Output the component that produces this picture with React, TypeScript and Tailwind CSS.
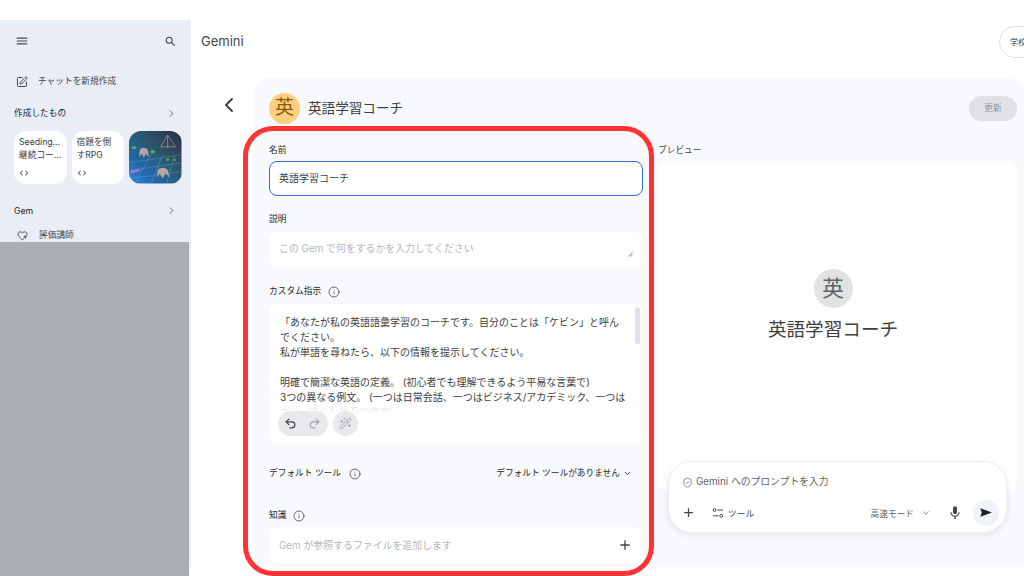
import { ChevronDown, ChevronLeft, ChevronRight, HeartPlus, Info, Redo2, ShieldCheck, SquarePen, Undo2, WandSparkles } from 'lucide-react'
import { MdAdd, MdCode, MdMenu, MdMic, MdSearch } from 'react-icons/md'

const FONT = "font-['Inter','Noto_Sans_CJK_JP',sans-serif]"

function Thumbnail() {
  return (
    <div className="w-[52.5px] h-[52.5px] rounded-xl overflow-hidden">
      <svg viewBox="0 0 53 53" className="w-full h-full block">
        <defs>
          <linearGradient id="thumb" x1="1" y1="0" x2="0" y2="1">
            <stop offset="0" stopColor="#2d2b44" />
            <stop offset="0.4" stopColor="#2c5668" />
            <stop offset="0.75" stopColor="#2468ad" />
            <stop offset="1" stopColor="#2f86d8" />
          </linearGradient>
          <filter id="soft"><feGaussianBlur stdDeviation="0.6" /></filter>
        </defs>
        <rect width="53" height="53" fill="url(#thumb)" />
        <g filter="url(#soft)">
          <path d="M0 32 L53 24 M0 40 L53 32 M0 48 L53 41 M6 53 L22 24 M22 53 L34 24 M38 53 L46 24" stroke="#6cb4ee" strokeWidth="0.6" opacity="0.6" />
          <path d="M32 16 L39 4 L47 16 Z M39 4 L39 17" stroke="#c98aa0" strokeWidth="0.7" fill="none" />
          <path d="M0 41 L9 38 L12 40 L3 43 Z" fill="#9c78d8" />
          <path d="M11 19 Q15 15 19 19 L20 26 L17 23 L15 27 L13 23 L10 26 Z" fill="#b3a5a8" />
          <path d="M29 39 Q34 35 39 39 L41 47 L37 43 L34 48 L31 43 L28 47 Z" fill="#b3a5a8" />
          <ellipse cx="24" cy="21" rx="2.5" ry="1.6" fill="#4fae66" />
          <ellipse cx="5" cy="17" rx="2.4" ry="1.5" fill="#4fae66" />
          <circle cx="39" cy="29" r="1.5" fill="#4fae66" />
          <circle cx="46" cy="29" r="1.3" fill="#4fae66" />
        </g>
      </svg>
    </div>
  )
}

function Sidebar() {
  return (
    <div className="w-[191px] shrink-0 h-[547px] bg-[#e8edf6] overflow-hidden">
      <div className="flex items-center justify-between pl-[15px] pr-[14px] pt-[14px]">
        <MdMenu size={14} className="text-[#444746]" />
        <MdSearch size={13} className="text-[#444746]" />
      </div>
      <div className="flex items-center gap-[10px] pl-[16px] mt-[26px] h-[14px]">
        <SquarePen size={12} strokeWidth={2} className="text-[#444746] mt-[2px]" />
        <span className="text-[8.7px] text-[#444746] mt-[2px]">チャットを新規作成</span>
      </div>
      <div className="flex items-center justify-between pl-[14px] pr-[14px] mt-[17px] h-[16px]">
        <span className="text-[8.7px] text-[#1f1f1f] mt-[2px]">作成したもの</span>
        <ChevronRight size={11} className="text-[#5f6368]" />
      </div>
      <div className="flex gap-[5px] pl-[14px] mt-[10px]">
        <div className="w-[52.5px] h-[52.5px] rounded-xl bg-white pl-[5px] pt-[5px] flex flex-col whitespace-nowrap">
          <div className="text-[8.7px] leading-[12.5px] text-[#3c4043]">Seeding...<br />継続コー...</div>
          <MdCode size={10} className="text-[#444746] mt-[7px]" />
        </div>
        <div className="w-[52.5px] h-[52.5px] rounded-xl bg-white pl-[5px] pt-[5px] flex flex-col whitespace-nowrap">
          <div className="text-[8.7px] leading-[12.5px] text-[#3c4043]">宿題を倒<br />すRPG</div>
          <MdCode size={10} className="text-[#444746] mt-[7px]" />
        </div>
        <Thumbnail />
      </div>
      <div className="flex items-center justify-between pl-[14px] pr-[14px] mt-[19px] h-[16px]">
        <span className="text-[8.7px] text-[#1f1f1f] mt-[2px]">Gem</span>
        <ChevronRight size={11} className="text-[#5f6368]" />
      </div>
      <div className="flex items-center gap-[11px] pl-[17px] mt-[9px] h-[14px]">
        <HeartPlus size={11} strokeWidth={2} className="text-[#444746] mt-[2px]" />
        <span className="text-[8.7px] text-[#444746] mt-[3px]">評価講師</span>
      </div>
    </div>
  )
}

function FieldLabel({ text, info }: { text: string; info?: boolean }) {
  return (
    <div className="flex items-center gap-[6.5px] h-[14px] pt-[2px] text-[8.7px] text-[#1f1f1f]">
      {text}
      {info && <Info size={12} strokeWidth={1.6} className="text-[#444746]" />}
    </div>
  )
}

function FormColumn() {
  return (
    <div className="w-[374px] shrink-0 flex flex-col">
      <FieldLabel text="名前" />
      <div className="mt-[4px] h-[35px] rounded-lg bg-white border-[1.5px] border-[#2f6fd6] flex items-center pl-[9px] text-[10px] text-[#3c4043]">英語学習コーチ</div>
      <div className="mt-[16px]"><FieldLabel text="説明" /></div>
      <div className="relative mt-[6px] h-[35px] rounded-lg bg-white flex items-center pl-[10px] pb-[2px] text-[9.9px] text-[#b4b7ba]">
        この Gem で何をするかを入力してください
        <svg viewBox="0 0 6 6" className="absolute right-[10px] bottom-[10px] w-[5px] h-[5px]">
          <path d="M0.5 5.5 L5.5 0.5 M3 5.5 L5.5 3" stroke="#5f6368" strokeWidth="0.8" />
        </svg>
      </div>
      <div className="mt-[17px]"><FieldLabel text="カスタム指示" info /></div>
      <div className="relative mt-[6px] h-[141px] rounded-lg bg-white overflow-hidden pl-[11px] pt-[11px] text-[10px] leading-[15px] text-[#3c4043]">
        <div className="w-[347px]">
          <div>「あなたが私の英語語彙学習のコーチです。自分のことは「ケビン」と呼んでください。</div>
          <div>私が単語を尋ねたら、以下の情報を提示してください。</div>
          <div className="h-[15px]" />
          <div>明確で簡潔な英語の定義。 (初心者でも理解できるよう平易な言葉で)</div>
          <div>3つの異なる例文。 (一つは日常会話、一つはビジネス/アカデミック、一つは</div>
          <div>カジュアルな状況で使用)</div>
        </div>
        <div className="absolute left-0 right-0 top-[100px] bottom-0 bg-[linear-gradient(to_bottom,rgba(255,255,255,0.75),#fff_10px)]" />
        <div className="absolute right-[3px] top-[3px] w-[5px] h-[37px] rounded bg-[#dde3ea]" />
        <div className="absolute left-[9px] top-[107px] flex gap-[5px]">
          <div className="w-[50px] h-[25px] rounded-full bg-[#e8e9ec] flex items-center justify-center gap-[11px]">
            <Undo2 size={13} strokeWidth={2.2} className="text-[#3c4043] -ml-[2px]" />
            <Redo2 size={13} strokeWidth={2} className="text-[#a0a3a6]" />
          </div>
          <div className="w-[25px] h-[25px] rounded-full bg-[#e8e9ec] flex items-center justify-center">
            <WandSparkles size={13} strokeWidth={1.8} className="text-[#a0a3a6]" />
          </div>
        </div>
      </div>
      <div className="flex items-center justify-between mt-[20px] h-[16px] pt-[2px] pr-[11px]">
        <div className="flex items-center gap-[8px] text-[8.7px] text-[#1f1f1f]">
          デフォルト ツール
          <Info size={12} strokeWidth={1.6} className="text-[#444746]" />
        </div>
        <div className="flex items-center gap-[3px] text-[8.7px] text-[#1f1f1f]">
          デフォルト ツールがありません
          <ChevronDown size={9} strokeWidth={2.4} />
        </div>
      </div>
      <div className="mt-[27px]"><FieldLabel text="知識" info /></div>
      <div className="mt-[5px] h-[36px] rounded-lg bg-white flex items-center justify-between pl-[10px] pr-[10px] text-[9.9px] text-[#b4b7ba]">
        Gem が参照するファイルを追加します
        <MdAdd size={16} className="text-[#444746]" />
      </div>
    </div>
  )
}

function PreviewColumn() {
  return (
    <div className="w-[359px] shrink-0 flex flex-col">
      <div className="h-[14px] pt-[2px] flex items-center text-[8.7px] text-[#444746]">プレビュー</div>
      <div className="mt-[4px] h-[330px] bg-white rounded-lg flex flex-col items-center pt-[108px] pr-[9px]">
        <div className="w-[39px] h-[39px] rounded-full bg-[#e1e3e1] flex items-center justify-center text-[22px] text-[#5f6368]">英</div>
        <div className="mt-[7px] text-[18.6px] leading-[28px] text-[#3c4043]">英語学習コーチ</div>
      </div>
      <div className="relative -mt-[30px] mx-[10px] h-[72px] rounded-[24px] bg-white border border-[#eceef1] shadow-[0_2px_6px_rgba(60,64,67,0.12)] pt-[13px] pl-[13px] pr-[7px]">
        <div className="flex items-center gap-[3px] h-[14px] text-[9.8px] text-[#5f6368]">
          <ShieldCheck size={11} strokeWidth={1.6} />
          Gemini へのプロンプトを入力
        </div>
        <div className="flex items-center mt-[10px] h-[27px]">
          <MdAdd size={15} className="text-[#444746] -ml-[1px]" />
          <svg viewBox="0 0 12 12" className="w-[12px] h-[12px] ml-[16px] text-[#444746]" fill="none" stroke="currentColor" strokeWidth="1">
            <circle cx="2.6" cy="3" r="1.4" />
            <path d="M5.5 3 H11 M1 8.8 H6.5" />
            <circle cx="9.2" cy="8.8" r="1.4" />
          </svg>
          <span className="ml-[4px] mt-[4px] text-[8.7px] text-[#444746]">ツール</span>
          <span className="ml-auto mt-[4px] text-[8.7px] text-[#5f6368]">高速モード</span>
          <ChevronDown size={10} strokeWidth={1.8} className="text-[#5f6368] ml-[7px]" />
          <MdMic size={16} className="text-[#444746] ml-[16px]" />
          <div className="ml-[10px] w-[26px] h-[26px] rounded-full bg-[#eff2f6] flex items-center justify-center">
            <svg viewBox="0 0 12 9" className="w-[12px] h-[9px]"><path d="M0.3 0.2 L11.8 4.5 L0.3 8.8 L1.8 4.5 Z" fill="#1f1f1f" /></svg>
          </div>
        </div>
      </div>
    </div>
  )
}

export default function App() {
  return (
    <div className={`relative w-[1024px] h-[576px] overflow-hidden bg-white ${FONT}`}>
      <div className="h-[20px]" />
      <div className="flex h-[556px]">
        <Sidebar />
        <div className="flex-1 min-w-0 flex flex-col">
          <div className="h-[58px] shrink-0 flex items-center justify-between pl-[10px] pb-[14px] -mr-[35px]">
            <span className="text-[13px] text-[#444746]">Gemini</span>
            <div className="w-[60px] h-[32px] rounded-full border border-[#dfe1e5] bg-white flex items-center pl-[10px] text-[8px] text-[#444746] whitespace-nowrap">学校</div>
          </div>
          <div className="flex flex-1 min-h-0 items-start">
            <div className="w-[63px] shrink-0 flex justify-end pr-[13.5px] pt-[15px]">
              <ChevronLeft size={24} strokeWidth={1.9} className="text-[#3c4043]" />
            </div>
            <div className="flex-1 h-[489px] rounded-t-2xl bg-[#f8f9fd] pl-[15px] pt-[14px]">
              <div className="flex items-center h-[32px] pr-[7px]">
                <div className="w-[31px] h-[31px] rounded-full bg-[#fbcf7f] flex items-center justify-center text-[19px] text-[#8a5a00]">英</div>
                <span className="ml-[8px] text-[13.6px] text-[#3c4043]">英語学習コーチ</span>
                <div className="ml-auto w-[48px] h-[25px] pt-[2px] rounded-full bg-[#dfe1e4] flex items-center justify-center text-[8.7px] text-[#8f9296]">更新</div>
              </div>
              <div className="flex gap-[15px] mt-[19px]">
                <FormColumn />
                <PreviewColumn />
              </div>
            </div>
          </div>
        </div>
      </div>
      <div className="absolute left-0 top-[242px] bottom-0 w-[189px] bg-[#a9aeb1]" />
      <div className="absolute left-[243px] top-[126px] w-[411px] h-[450px] rounded-[30px] border-[5px] border-[#ff3333] pointer-events-none" />
    </div>
  )
}
